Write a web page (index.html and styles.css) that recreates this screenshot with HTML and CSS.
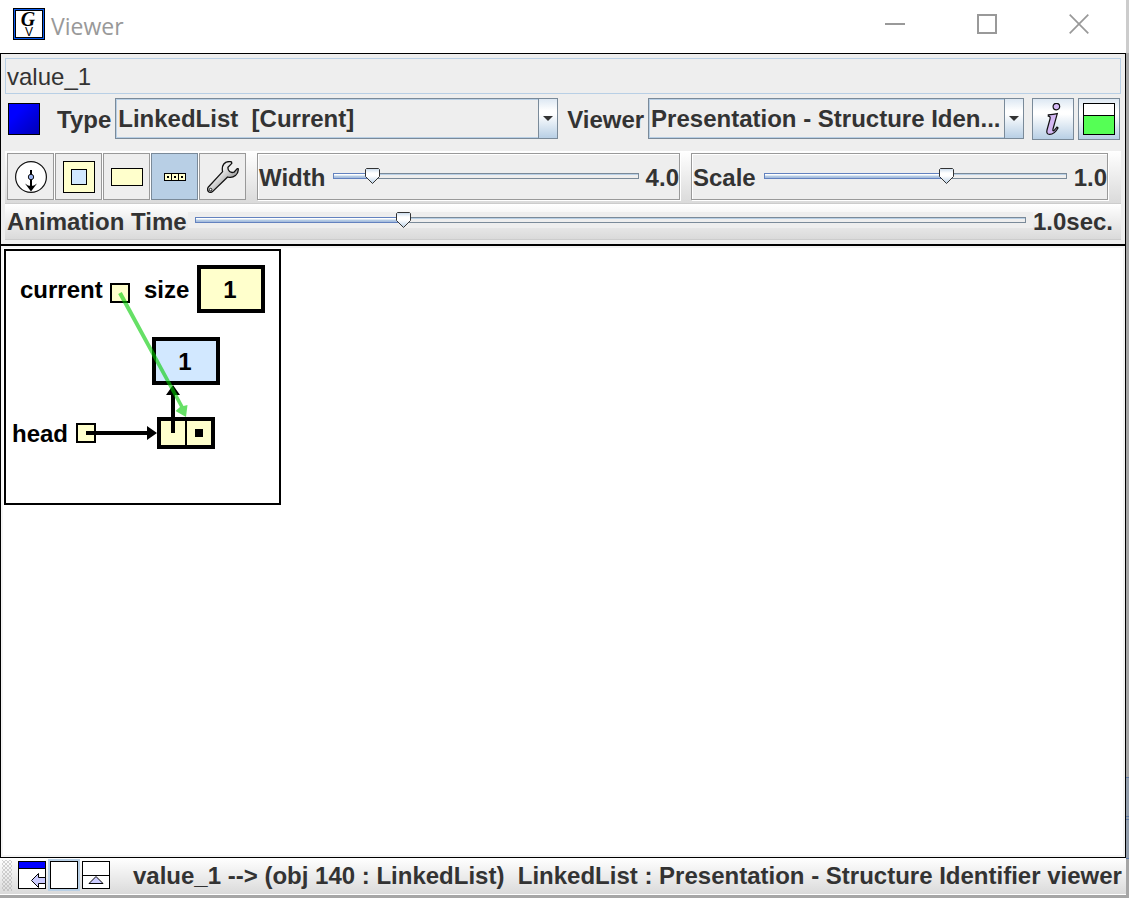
FILE: index.html
```html
<!DOCTYPE html>
<html lang="en">
<head>
<meta charset="utf-8">
<title>Viewer</title>
<link rel="stylesheet" href="styles.css">
</head>
<body>
<div class="window">
  <header class="titlebar">
    <svg class="app-icon" width="32" height="32" viewBox="0 0 32 32" aria-hidden="true">
      <rect width="32" height="32" fill="#000"/>
      <rect x="1" y="1" width="30" height="30" fill="#0a5cf0"/>
      <rect x="2" y="2" width="28" height="28" fill="#000"/>
      <rect x="3" y="3" width="26" height="26" fill="#fff"/>
      <text class="logo-g" x="15" y="18" text-anchor="middle">G</text>
      <text class="logo-v" x="16" y="28" text-anchor="middle">V</text>
    </svg>
    <h1 class="title">Viewer</h1>
    <div class="window-controls">
      <button class="win-btn" type="button" aria-label="Minimize"><svg width="20" height="20" viewBox="0 0 20 20"><path d="M0 10H20" stroke="#999" stroke-width="2"/></svg></button>
      <button class="win-btn" type="button" aria-label="Maximize"><svg width="20" height="20" viewBox="0 0 20 20"><rect x="1" y="1" width="18" height="18" fill="none" stroke="#999" stroke-width="2"/></svg></button>
      <button class="win-btn" type="button" aria-label="Close"><svg width="20" height="20" viewBox="0 0 20 20"><path d="M.7 .7L19.3 19.3M19.3 .7L.7 19.3" stroke="#999" stroke-width="1.7"/></svg></button>
    </div>
  </header>

  <section class="controls">
    <input class="expression" type="text" value="value_1" aria-label="Expression">
    <div class="selectors">
      <svg class="swatch" width="32" height="32" viewBox="0 0 32 32" aria-hidden="true">
        <defs><linearGradient id="blue" x1="0" y1="0" x2="1" y2="1"><stop offset=".3" stop-color="#00f"/><stop offset="1" stop-color="#0000b4"/></linearGradient></defs>
        <rect x=".5" y=".5" width="31" height="31" fill="url(#blue)" stroke="#000"/>
      </svg>
      <label class="label" for="type">Type</label>
      <div class="combo combo-type">
        <select id="type"><option>LinkedList&nbsp; [Current]</option></select>
        <span class="combo-arrow"></span>
      </div>
      <label class="label label-viewer" for="viewer">Viewer</label>
      <div class="combo combo-viewer">
        <select id="viewer"><option>Presentation - Structure Iden...</option></select>
        <span class="combo-arrow"></span>
      </div>
      <button class="metal-btn info-btn" type="button" aria-label="Information">
        <svg width="32" height="32" viewBox="0 0 32 32"><g fill="#d4b8f4" stroke="#111" stroke-width="1.2"><circle cx="19.4" cy="3.6" r="3.3"/><path d="M11.300 11.8Q16 11.4 20.300 10.600L16 26Q15.400 28.8 17 27.600L20 24.200L21 25Q17.500 31.400 12.600 31.400Q9 31.200 10 27L13 16Q13.800 13.200 11.300 13.2Z"/></g></svg>
      </button>
      <button class="metal-btn" type="button" aria-label="Split view">
        <svg width="32" height="32" viewBox="0 0 32 32"><rect x=".5" y=".5" width="31" height="31" fill="#fff" stroke="#000"/><rect x="1" y="12" width="30" height="19" fill="#5f5"/><path d="M0 12.5H32" stroke="#000"/></svg>
      </button>
    </div>

    <div class="toolbar">
      <div class="tools">
        <button class="tool" type="button" aria-label="Step down">
          <svg width="32" height="32" viewBox="0 0 32 32"><circle cx="16" cy="16" r="15.4" fill="#fff" stroke="#111" stroke-width="1.2"/><path d="M16 9V28" stroke="#000" stroke-width="2"/><path d="M16 30.500L10 22.500Q13 25 16 25Q19 25 22 22.500Z"/><circle cx="16" cy="16" r="2.7" fill="#9bb4f0" stroke="#111"/></svg>
        </button>
        <button class="tool" type="button" aria-label="Nested box">
          <svg width="32" height="32" viewBox="0 0 32 32"><rect x=".5" y=".5" width="31" height="31" fill="#ffc" stroke="#000"/><rect x="8.5" y="8.5" width="15" height="15" fill="#d2e8ff" stroke="#000"/></svg>
        </button>
        <button class="tool" type="button" aria-label="Box">
          <svg width="32" height="32" viewBox="0 0 32 32"><rect x=".5" y="7.5" width="31" height="17" fill="#ffc" stroke="#000"/></svg>
        </button>
        <button class="tool tool-on" type="button" aria-label="Array" aria-pressed="true">
          <svg width="32" height="32" viewBox="0 0 32 32"><rect x="5.5" y="12.5" width="21" height="7" fill="#ffc" stroke="#000"/><path d="M12.5 12V20M19.5 12V20" stroke="#000"/><path d="M8 15h2v2h-2zM15 15h2v2h-2zM22 15h2v2h-2z"/></svg>
        </button>
        <button class="tool" type="button" aria-label="Settings">
          <svg width="32" height="32" viewBox="0 0 32 32"><defs><linearGradient id="steel" x1="0" y1="0" x2="1" y2="1"><stop offset="0" stop-color="#fff"/><stop offset=".4" stop-color="#e8e8e8"/><stop offset=".65" stop-color="#aaa"/><stop offset="1" stop-color="#eee"/></linearGradient></defs><path d="M24.500 .8Q19.500 -.2 16.800 3Q14.600 6 15.600 10.600L1.200 26.200Q-.2 28.800 1.600 30.800Q4 32.200 5.800 30.400L20.600 16Q25 17.400 28.400 14.600Q31.800 11.400 31.200 7.600L30.200 7.600L27 11.200Q24.500 12 22.600 10.600Q20.600 8.800 21 6.200L24.800 2.400Z" fill="url(#steel)" stroke="#111" stroke-width="1.300" stroke-linejoin="round"/><circle cx="3.600" cy="28.600" r="1.300" fill="#fff" stroke="#111"/></svg>
        </button>
      </div>
      <div class="slider-box slider-box-width">
        <label class="label" for="width">Width</label>
        <input id="width" class="slider" type="range" min="0" max="1000" value="127" style="--at: 12.7%">
        <output class="label" for="width">4.0</output>
      </div>
      <div class="slider-box slider-box-scale">
        <label class="label" for="scale">Scale</label>
        <input id="scale" class="slider" type="range" min="0" max="1000" value="605" style="--at: 60.5%">
        <output class="label" for="scale">1.0</output>
      </div>
    </div>

    <div class="animation-bar">
      <label for="time">Animation Time</label>
      <input id="time" class="slider" type="range" min="0" max="1000" value="251" style="--at: 25.1%">
      <output for="time">1.0sec.</output>
    </div>
  </section>

  <main class="canvas">
    <svg class="diagram" width="277" height="256" viewBox="4 249 277 256" role="img" aria-label="Linked list">
      <rect x="5" y="250" width="275" height="254" fill="#fff" stroke="#000" stroke-width="2"/>
      <g fill="#ffc" stroke="#000">
        <rect x="111" y="284" width="18" height="18" stroke-width="2"/>
        <rect x="77" y="424" width="18" height="18" stroke-width="2"/>
        <rect x="199" y="267" width="64" height="44" stroke-width="4"/>
        <rect x="154" y="339" width="64" height="44" stroke-width="4" fill="#d2e8ff"/>
        <rect x="159" y="419" width="54" height="28" stroke-width="4"/>
        <path d="M186 419V447" stroke-width="2"/>
      </g>
      <rect x="195" y="429" width="8" height="8"/>
      <path d="M86 433H150M173 433V392" stroke="#000" stroke-width="4"/>
      <path d="M147 426L157 433L147 440ZM166 395L173 385L180 395Z"/>
      <g class="node-text">
        <text x="20" y="298">current</text>
        <text x="144" y="298">size</text>
        <text x="12" y="442">head</text>
        <text x="230" y="298" text-anchor="middle">1</text>
        <text x="185" y="370" text-anchor="middle">1</text>
      </g>
      <path d="M118.200 294L180 407L175.500 411L186 417L187.500 405L183.500 406L121.800 292Z" fill="#0c0" opacity=".6"/>
    </svg>
  </main>

  <footer class="statusbar">
    <span class="grip"></span>
    <div class="panes">
      <button class="pane" type="button" aria-label="Dock"><svg width="28" height="28" viewBox="0 0 28 28"><rect x=".5" y=".5" width="27" height="27" fill="#fff" stroke="#000"/><path d="M1 1H27V7H1Z" fill="#00f"/><path d="M0 7.500H28" stroke="#000"/><path d="M13.500 19.500L20.500 12.500V16.500H27.500V22.500H20.500V26.500Z" fill="#ccf" stroke="#000"/></svg></button>
      <button class="pane pane-on" type="button" aria-label="Single pane"><svg width="28" height="28" viewBox="0 0 28 28"><rect x=".5" y=".5" width="27" height="27" fill="#fff" stroke="#000"/></svg></button>
      <button class="pane" type="button" aria-label="Raise pane"><svg width="28" height="28" viewBox="0 0 28 28"><rect x=".5" y=".5" width="27" height="27" fill="#fff" stroke="#000"/><path d="M0 14.500H28" stroke="#000"/><path d="M7 22.500L14 15.500L21 22.500Z" fill="#ccf" stroke="#000"/></svg></button>
    </div>
    <span class="status-text">value_1 --&gt; (obj 140 : LinkedList)&nbsp; LinkedList : Presentation - Structure Identifier viewer</span>
  </footer>
</div>
</body>
</html>
```
FILE: styles.css
```css
* { box-sizing: border-box; }
html, body { height: 100%; }
body {
  margin: 0;
  padding: 0 3px 3px 0;
  background:
    linear-gradient(#5f7ba8, #5f7ba8) right bottom 120px / 3px 1px no-repeat,
    linear-gradient(#5f7ba8, #5f7ba8) right bottom 81px / 3px 1px no-repeat,
    linear-gradient(#5f7ba8, #5f7ba8) right bottom 78px / 3px 1px no-repeat,
    linear-gradient(#5f7ba8, #5f7ba8) right bottom 39px / 3px 1px no-repeat,
    linear-gradient(#939eac, #939eac) right bottom 39px / 3px 82px no-repeat,
    linear-gradient(#ccc, #ccc) right top / 3px 53px no-repeat,
    #a6a6a6;
  color: #333;
  font: bold 24px/27px "Liberation Sans", Arial, sans-serif;
}
button { margin: 0; padding: 0; border: 0; background: none; }
svg { display: block; }
.window { display: flex; flex-direction: column; height: 100%; background: #eee; }

.titlebar {
  display: flex;
  align-items: center;
  height: 53px;
  padding: 0 1px 5px 13px;
  background: #fff;
}
.logo-g { font: italic bold 20px "Liberation Serif", serif; }
.logo-v { font: 12px "Liberation Sans", sans-serif; }
.title {
  flex: 1;
  margin: 0 0 0 6px;
  padding-top: 4px;
  font: 23px/30px "Open Sans", sans-serif;
  color: #999;
}
.window-controls { display: flex; }
.win-btn { display: flex; justify-content: center; width: 92px; }

.controls {
  padding: 4px 4px;
  border: 1px solid #000;
  border-bottom-width: 2px;
}
.expression {
  display: block;
  width: 100%;
  height: 36px;
  padding: 1px 1px 0;
  border: 1px solid #b8cfe5;
  background: #eee;
  color: #333;
  font: 24px "Liberation Sans", Arial, sans-serif;
}
.selectors { display: flex; padding: 4px 1px 11px 3px; }
.swatch { margin: 5px 17px 0 0; }
.label { padding-top: 2px; white-space: nowrap; }
.selectors .label { padding: 8px 4px 0 0; }
.selectors .label-viewer { margin-left: 9px; }
.combo { position: relative; min-width: 0; height: 41px; }
.combo-type { flex: 443 1 0; }
.combo-viewer { flex: 376 1 0; }
.combo select {
  display: block;
  appearance: none;
  width: 100%;
  height: 100%;
  padding: 0 20px 0 2px;
  border: 1px solid #7a8a99;
  border-radius: 0;
  background: #eee;
  box-shadow: inset 1px 1px #b8cfe5, inset 0 -1px #b8cfe5;
  color: #333;
  font: inherit;
}
.combo-arrow {
  position: absolute;
  inset: 0 0 0 auto;
  display: grid;
  place-items: center;
  width: 20px;
  border: 1px solid #7a8a99;
  background: linear-gradient(#dde8f3, #fff 30%, #fff 38%, #b8cfe5);
  pointer-events: none;
}
.combo-arrow::before {
  content: "";
  border: 5px solid transparent;
  border-top-color: #333;
  border-bottom: 0;
}
.metal-btn {
  display: grid;
  place-items: center;
  width: 42px;
  height: 42px;
  margin-left: 4px;
  border: 1px solid #7a8a99;
  background: linear-gradient(#dde8f3, #fff 30%, #fff 38%, #b8cfe5);
}
.info-btn { margin-left: 8px; }

.toolbar, .animation-bar {
  display: flex;
  border-bottom: 1px solid #ccc;
  background: linear-gradient(#fff, #dadada);
}
.toolbar { height: 53px; gap: 11px; padding: 2px 13px 3px 2px; }
.tools { display: flex; gap: 1px; background: #fff; }
.tool {
  display: grid;
  place-items: center;
  width: 47px;
  height: 47px;
  border: 1px solid #999;
  background: #eee;
}
.tool-on { border-color: #7a8a99; background: #b8cfe5; }
.slider-box {
  display: flex;
  align-items: center;
  min-width: 0;
  height: 47px;
  padding-left: 1px;
  border: 1px solid #999;
  background: #eee;
  box-shadow: inset 1px 1px #fff, 1px 1px #fff;
}
.slider-box-width { flex: 423 1 0; }
.slider-box-scale { flex: 417 1 0; }
.animation-bar {
  align-items: center;
  height: 36px;
  padding: 0 8px 1px 2px;
  white-space: nowrap;
}
.slider {
  flex: 1;
  appearance: none;
  min-width: 0;
  height: 16px;
  margin: 0 0 2px 1px;
  background: #eee;
}
.slider::-webkit-slider-runnable-track {
  height: 16px;
  background:
    linear-gradient(#6382bf, #6382bf) 7px 5px / 1px 6px no-repeat,
    linear-gradient(#7a8a99, #7a8a99) right 7px top 5px / 1px 6px no-repeat,
    linear-gradient(#6382bf 1px, #fff 1px, #fff 2px, #b8cfe5 3px, #a3b8dd 5px, #6382bf 5px) 7px 5px / calc(var(--at) - 4px) 6px no-repeat,
    linear-gradient(#7a8a99 1px, #b8cfe5 1px, #b8cfe5 2px, #eee 2px, #eee 5px, #7a8a99 5px) 7px 5px / calc(100% - 14px) 6px no-repeat;
}
.slider::-webkit-slider-thumb {
  appearance: none;
  width: 15px;
  height: 16px;
  background: url("data:image/svg+xml,%3Csvg xmlns='http://www.w3.org/2000/svg' width='15' height='16'%3E%3Cdefs%3E%3ClinearGradient id='g' x2='0' y2='1'%3E%3Cstop stop-color='%23c8daec'/%3E%3Cstop offset='.3' stop-color='%23fff'/%3E%3Cstop offset='.5' stop-color='%23fff'/%3E%3Cstop offset='1' stop-color='%23b8cfe5'/%3E%3C/linearGradient%3E%3C/defs%3E%3Cpath d='M1.500 .5H13.500L14.500 1.500V8.500L7.500 15.500L.5 8.500V1.500Z' fill='url(%23g)' stroke='%23333'/%3E%3C/svg%3E") no-repeat;
}

.canvas {
  flex: 1;
  min-height: 0;
  padding: 3px;
  border: 1px solid #000;
  border-top: 0;
  background: #fff;
  box-shadow: inset 2px 2px #f4f4f4, inset -2px -2px #f4f4f4;
}
.node-text { font: bold 24px "Liberation Sans", Arial, sans-serif; }

.statusbar {
  display: flex;
  align-items: center;
  height: 37px;
  padding: 0 0 2px 2px;
  border-bottom: 1px solid #fff;
  background: linear-gradient(#fff, #dadada);
}
.grip {
  width: 10px;
  height: 31px;
  background:
    radial-gradient(#aaa 20%, transparent 30%) 0 0 / 4px 4px,
    radial-gradient(#aaa 20%, transparent 30%) 2px 2px / 4px 4px;
}
.panes { display: flex; gap: 4px; margin: 0 23px 0 6px; }
.pane-on { box-shadow: 0 0 0 2px #b8cfe5; }
.status-text { white-space: nowrap; }
```
